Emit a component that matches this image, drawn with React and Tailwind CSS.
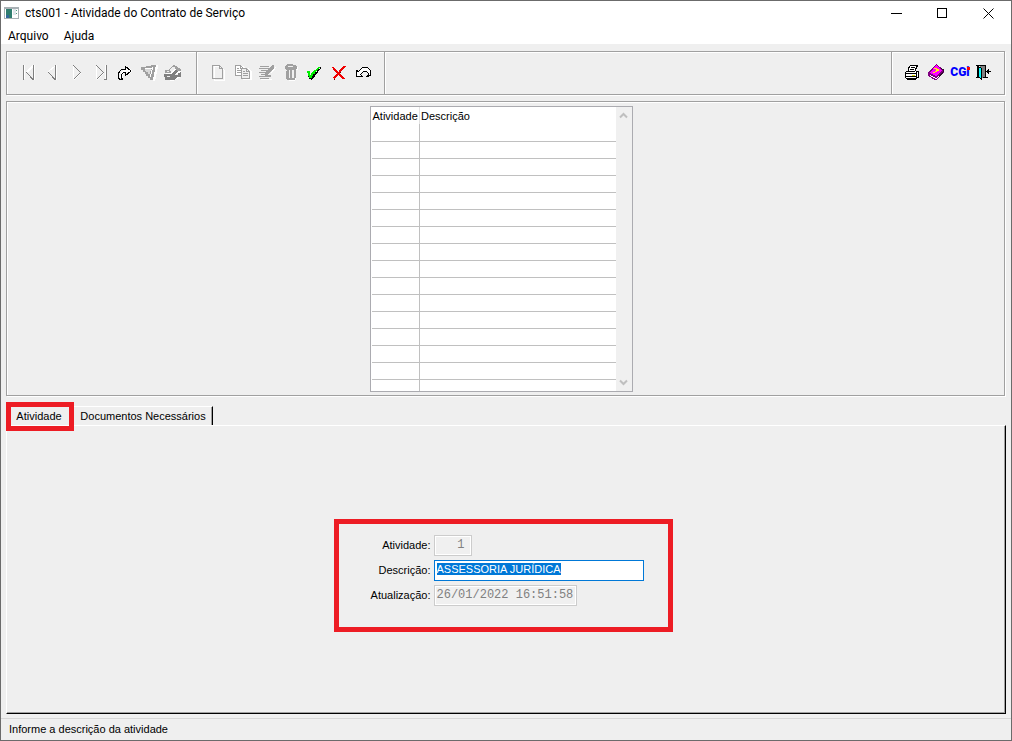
import React, { useEffect, useRef, useState } from "react";

const ROWS = Array.from({ length: 15 }, (_, i) => i);

function Icon({ children }) {
  return (
    <svg width="18" height="18" viewBox="0 0 18 18" fill="none" shapeRendering="crispEdges" aria-hidden="true">
      {children}
    </svg>
  );
}

const icons = {
  first: (
    <Icon>
      <path d="M4.5 2v14M14.5 2v15M13.5 3l-6 6" stroke="#fff" />
      <path d="M3.5 2v15M13.5 2v15M13 16.5L6.5 9.5" stroke="#808080" />
      <path d="M13 2.5L6.5 9" stroke="#fff" />
    </Icon>
  ),
  prev: (
    <Icon>
      <path d="M12.5 2v15M11.5 2.5L4 9" stroke="#fff" />
      <path d="M11.5 2v15M11 16.5L4.5 9.5" stroke="#808080" />
    </Icon>
  ),
  next: (
    <Icon>
      <path d="M5.5 2v14M6 16.5L13 9.5" stroke="#fff" />
      <path d="M5.5 2.5L12.5 9.5L5.5 16.5" stroke="#808080" />
    </Icon>
  ),
  last: (
    <Icon>
      <path d="M4.5 3v13M13.5 2v15M5 16.5L11.5 10" stroke="#fff" />
      <path d="M4.5 2.5L11.5 9.5L4.5 16.5M14.5 2v15M12 16.5h3" stroke="#808080" />
    </Icon>
  ),
  go: (
    <Icon>
      <path d="M4 15h3v-4l2-2h3v3l4-4-4-4v2H9L5 9z" fill="#fff" />
      <path d="M4.5 16.5h-1l-1-2v-4l1-2 2-2h4v-3l5 4v1l-5 4v-3h-2l-2 2v3l1 2z" stroke="#000" />
    </Icon>
  ),
  filter: (
    <Icon>
      <path d="M2 5L18 2v2l-3 14h-2L2 7z" fill="#fff" />
      <path d="M1 4h5V3h5V2h5v2h-1v5h-1v5h-1v3h-3v-2H8v-2H6v-2H5V9H3V7H1z" fill="#a0a0a0" />
      <path d="M5 6h6v1l-2 5-1-1V9H6V8H5z" fill="#d8d8d8" />
      <path d="M12.5 4v3M11.5 7v4M10.5 11v3M5 5.5h7" stroke="#fff" />
    </Icon>
  ),
  search: (
    <Icon>
      <path d="M2 9l8-7 7 6v6l-8 4-7-1z" fill="#fff" />
      <path d="M1 7h3l6-5 7 4v2h-3l-3-2-5 4H1z" fill="#a0a0a0" />
      <path d="M5 7l4-3 3 1-5 4zM3 8h2v1H3z" fill="#efefef" />
      <path d="M0 11h7l5-4 2 1-3 3h2l4-2v5h-3l-4 3H1z" fill="#808080" />
      <path d="M3 13.5h3M11 11.5h3" stroke="#efefef" />
    </Icon>
  ),
  add: (
    <Icon>
      <path d="M4.5 3.5h6l4 4v10h-10z" stroke="#fff" />
      <path d="M2.5 2.5h7l3 3v10h-10zM9.5 2.5v3h3" stroke="#a0a0a0" />
    </Icon>
  ),
  copy: (
    <Icon>
      <path d="M2 3h7l2 2h3l4 4v8H9v-4H2z" fill="#fff" />
      <path d="M1.5 2.5h5l3 3v7h-8zM6.5 2.5v3h3M3 5.5h2M3 7.5h5M3 9.5h5" stroke="#a0a0a0" />
      <path d="M8 5h5l3 3v8H8z" fill="#efefef" />
      <path d="M7.5 5.5h5l3 3v7h-8zM12.5 5.5v3h3M9 8.5h2M9 10.5h5M9 12.5h5" stroke="#a0a0a0" />
    </Icon>
  ),
  edit: (
    <Icon>
      <path d="M3 16.5h11M13 10l5-6" stroke="#fff" />
      <path d="M2 3.5h9M1 5.5h11M3 7.5h8M1 9.5h8M3 11.5h6M1 13.5h7M2 15.5h9" stroke="#a0a0a0" />
      <path d="M14 2h2v3l-6 7-3 1v-3zM9 12h4v2H8z" fill="#a0a0a0" />
    </Icon>
  ),
  trash: (
    <Icon>
      <path d="M4 4h12v3h-2v9l-2 2H7l-1-1V7H4z" fill="#fff" />
      <path d="M5 1h6v1h3v1h1v3H3V3h1V2h1zM4 6h10v9h-1v2H5v-1H4z" fill="#a0a0a0" />
      <path d="M6 3h5v1H6zM7 7h1v8H7zM10 7h2v8h-2zM4 7h1v1H4z" fill="#efefef" />
    </Icon>
  ),
  confirm: (
    <Icon>
      <path d="M2 9h1v5h2v2H3v-2H2zM5 15h1v-2h1v-2h2V9h2V7h1V6h2V4h1v1L6 17H5z" fill="#000" />
      <path d="M1 8h3v4h1v-2h1V9h1V8h1V7h2V6h1V5h1V4h2v1h-1v1h-1v1h-1v1h-1v1H9v2H7v2H6v2H3v-2H2v-3H1z" fill="#00f000" />
    </Icon>
  ),
  cancel: (
    <Icon>
      <path d="M3 4.5L14.5 16.5M15.5 3L4 16.5" stroke="#700000" />
      <path d="M2.5 4L14 16M15 3L3.5 15.5" stroke="#f00000" strokeWidth="2" />
    </Icon>
  ),
  undo: (
    <Icon>
      <path
        d="M2.5 7.5v6h6l-2-2 3-3h3l2 2v2l-2 1h1l3-1v-5l-3-3h-5l-4 4z"
        fill="#fff"
        stroke="#000"
      />
    </Icon>
  ),
  print: (
    <Icon>
      <path d="M6 3h9l-2 6h3v6l-3 2H3v-7l3-2z" fill="#fff" />
      <path d="M6.5 2.5h8v1h-1v2h-1v2M6.5 2.5v2h-1v3M8 4.5h4M7 6.5h4M3 8.5h9M2.5 9v6M3 10.5h10M13.5 9v7M3 15.5h10M4 16.5h9M14 8.5h1v6h-1M3 13.5h10M13 8.5h2" stroke="#000" />
      <path d="M4 12h8v1H4z" fill="#fff" />
      <path d="M9 12h3v1H9z" fill="#e0e000" />
    </Icon>
  ),
  help: (
    <Icon>
      <path d="M9 1l8 6v2l-7 8H8l-7-4v-3z" fill="#800080" />
      <path d="M9 2l6 5-6 6-6-3z" fill="#ff00ff" />
      <path d="M3 12l6 3 6-6v1l-6 6-6-3z" fill="#fff" />
      <path d="M14 5h1v1h2v3h-1v2l-4 3v-1l4-5z" fill="#301030" />
      <path d="M7 5h3v1h2v2h-2v1H8V8h1V6H7zM6 9h2v1H6z" fill="#ffff00" />
    </Icon>
  ),
  about: (
    <span className="relative font-[Roboto,'Liberation_Sans',sans-serif] text-[12px] font-black text-[#0000ff]">
      CGi
      <span className="absolute top-[2px] right-0 h-[3px] w-[3px] bg-[#ff0000]" />
    </span>
  ),
  exit: (
    <Icon>
      <path d="M5 3h5v12H5z" fill="#808080" />
      <path d="M1 2.5h10M2.5 2v13M10.5 2v13M1 14.5h3M8 14.5h5" stroke="#000" />
      <path d="M3.5 3.5l3 2v11l-3-3z" fill="#00ffff" stroke="#000" />
      <path d="M11 8.5h5M13.5 6v5M12.5 7v3" stroke="#000" />
    </Icon>
  ),
};

function ToolButton({ name, label, disabled }) {
  return (
    <button type="button" aria-label={label} title={label} disabled={disabled} className="flex h-6 w-6 items-center justify-center">
      {icons[name]}
    </button>
  );
}

function TitleBar() {
  return (
    <header className="flex h-6 items-center bg-white pl-[3px] font-[Roboto,'Noto_Sans',sans-serif] text-[12px]">
      <svg width="15" height="12" viewBox="0 0 15 12" shapeRendering="crispEdges" aria-hidden="true">
        <path d="M0 0h15v12H0z" fill="#a8b0b4" />
        <path d="M1 2h13v9H1z" fill="#fff" />
        <path d="M2 2h6v9H2z" fill="#2f7d6e" />
        <path d="M2 8h3v3H2z" fill="#306898" />
        <path d="M9 2h3v6H9z" fill="#dfe6ea" />
        <path d="M12 3h1v1h-1zM12 6h1v1h-1z" fill="#50a080" />
      </svg>
      <h1 className="ml-[6px] flex-1">cts001 - Atividade do Contrato de Serviço</h1>
      <button type="button" aria-label="Minimizar" className="flex h-full w-[46px] items-center justify-center">
        <svg width="11" height="11" shapeRendering="crispEdges"><path d="M0 5.5h11" stroke="#000" /></svg>
      </button>
      <button type="button" aria-label="Maximizar" className="flex h-full w-[46px] items-center justify-center">
        <svg width="10" height="10" shapeRendering="crispEdges"><path d="M.5.5h9v9h-9z" fill="none" stroke="#000" /></svg>
      </button>
      <button type="button" aria-label="Fechar" className="flex h-full w-[46px] items-center justify-center">
        <svg width="11" height="11"><path d="M.5.5l10 10M10.5.5l-10 10" stroke="#000" /></svg>
      </button>
    </header>
  );
}

function Toolbar() {
  return (
    <div role="toolbar" className="mr-px flex h-11 border border-[#a0a0a0] shadow-[1px_1px_0_#fff,inset_1px_1px_0_#fff]">
      <div className="flex w-[190px] items-center border-r border-[#a0a0a0] pb-[2px] pl-[10px]">
        <ToolButton name="first" label="Primeiro" disabled />
        <ToolButton name="prev" label="Anterior" disabled />
        <ToolButton name="next" label="Próximo" disabled />
        <ToolButton name="last" label="Último" disabled />
        <ToolButton name="go" label="Ir para" />
        <ToolButton name="filter" label="Filtrar" disabled />
        <ToolButton name="search" label="Pesquisar" disabled />
      </div>
      <div className="flex w-[188px] items-center border-r border-[#a0a0a0] pb-[2px] pl-[10px] shadow-[inset_1px_0_0_#fff]">
        <ToolButton name="add" label="Incluir" disabled />
        <ToolButton name="copy" label="Copiar" disabled />
        <ToolButton name="edit" label="Alterar" disabled />
        <ToolButton name="trash" label="Excluir" disabled />
        <ToolButton name="confirm" label="Confirmar" />
        <ToolButton name="cancel" label="Cancelar" />
        <ToolButton name="undo" label="Desfazer" />
      </div>
      <div className="flex-1 border-r border-[#a0a0a0] shadow-[inset_1px_0_0_#fff]" />
      <div className="flex w-28 items-center justify-center pb-[2px] shadow-[inset_1px_0_0_#fff]">
        <ToolButton name="print" label="Imprimir" />
        <ToolButton name="help" label="Manual" />
        <ToolButton name="about" label="CGI" />
        <ToolButton name="exit" label="Sair" />
      </div>
    </div>
  );
}

function ActivityGrid() {
  return (
    <section className="mr-px flex justify-center border border-[#a0a0a0] pt-1 pr-[9px] pb-[3px] shadow-[1px_1px_0_#fff,inset_1px_1px_0_#fff]">
      <div className="flex w-[263px] border border-[#ababb0] bg-white pl-px">
        <table className="flex-1 table-fixed border-collapse">
          <thead>
            <tr className="h-[17px]">
              <th className="w-12 border-r border-[#e3e3e3] p-0 pl-px text-left font-normal">Atividade</th>
              <th className="p-0 pl-px text-left font-normal">Descrição</th>
            </tr>
          </thead>
          <tbody>
            {ROWS.map((row) => (
              <tr key={row} className="h-[17px] border-b border-[#c0c0c0]">
                <td className="border-r border-[#c0c0c0] p-0" />
                <td className="p-0" />
              </tr>
            ))}
            <tr className="h-3">
              <td className="border-r border-[#c0c0c0] p-0" />
              <td className="p-0" />
            </tr>
          </tbody>
        </table>
        <div className="flex w-4 flex-col items-center justify-between bg-[#f0f0f0] py-1">
          <button type="button" aria-label="Rolar para cima">
            <svg className="block" width="9" height="9"><path d="M1 6.5l3.5-3.5L8 6.5" fill="none" stroke="#bfbfbf" strokeWidth="2" /></svg>
          </button>
          <button type="button" aria-label="Rolar para baixo">
            <svg className="block" width="9" height="9"><path d="M1 2.5L4.5 6 8 2.5" fill="none" stroke="#bfbfbf" strokeWidth="2" /></svg>
          </button>
        </div>
      </div>
    </section>
  );
}

function ActivityForm() {
  const descriptionRef = useRef(null);
  const [description, setDescription] = useState("ASSESSORIA JURÍDICA");

  useEffect(() => {
    descriptionRef.current.focus();
    descriptionRef.current.select();
  }, []);

  const readOnly =
    "h-[21px] border border-[#cccccc] bg-[#f0f0f0] px-[2px] font-['Liberation_Mono',monospace] text-[12px] text-[#808080] shadow-[inset_0_0_0_1px_#fff]";

  return (
    <form
      onSubmit={(e) => e.preventDefault()}
      className="grid w-[339px] grid-cols-[92px_1fr] items-center gap-x-[3px] gap-y-1 border-[5px] border-[#ed1c24] pt-[11px] pb-[21px]"
    >
      <label htmlFor="atividade" className="text-right">Atividade:</label>
      <input id="atividade" readOnly value="1" className={`${readOnly} w-[38px] pr-[6px] text-right`} />
      <label htmlFor="descricao" className="text-right">Descrição:</label>
      <input
        id="descricao"
        ref={descriptionRef}
        value={description}
        onChange={(e) => setDescription(e.target.value)}
        className="h-[21px] w-[210px] border border-[#0078d7] bg-white px-[2px] pb-[2px] outline-none selection:bg-[#0078d7] selection:text-white"
      />
      <label htmlFor="atualizacao" className="text-right">Atualização:</label>
      <input id="atualizacao" readOnly value="26/01/2022 16:51:58" className={`${readOnly} w-[143px]`} />
    </form>
  );
}

export default function App() {
  const [tab, setTab] = useState("atividade");

  return (
    <div className="flex min-h-screen flex-col border border-[#6b6b6b] bg-[#efefef] font-['Liberation_Sans',sans-serif] text-[11px] leading-[14px] text-black">
      <TitleBar />
      <nav className="flex h-[19px] items-center gap-[15px] bg-white pt-[2px] pl-[7px] font-[Roboto,'Noto_Sans',sans-serif] text-[12px]">
        <button type="button">Arquivo</button>
        <button type="button">Ajuda</button>
      </nav>

      <main className="flex flex-1 flex-col px-[5px] pt-[7px]">
        <Toolbar />
        <div className="h-[6px]" />
        <ActivityGrid />

        <div role="tablist" className="mt-[6px] flex h-[23px] items-stretch">
          <div className="relative w-[68px]">
            <button
              type="button"
              role="tab"
              aria-selected={tab === "atividade"}
              onClick={() => setTab("atividade")}
              className="h-full w-full pt-1 pr-[2px]"
            >
              Atividade
            </button>
            <span className="pointer-events-none absolute inset-x-0 top-0 z-10 h-[29px] border-[5px] border-[#ed1c24]" />
          </div>
          <button
            type="button"
            role="tab"
            aria-selected={tab === "documentos"}
            onClick={() => setTab("documentos")}
            className="mt-1 w-[139px] border-t border-r border-t-white border-r-black shadow-[inset_-1px_0_0_#a0a0a0]"
          >
            Documentos Necessários
          </button>
        </div>

        <section
          role="tabpanel"
          className="flex flex-1 items-center justify-center border border-t-white border-r-black border-b-black border-l-white pt-[11px] pr-[6px] shadow-[inset_-1px_-1px_0_#a0a0a0]"
        >
          {tab === "atividade" && <ActivityForm />}
        </section>
      </main>

      <footer className="mt-1 flex h-[22px] items-center border-t border-[#d7d7d7] pb-[2px] pl-2">Informe a descrição da atividade</footer>
    </div>
  );
}
